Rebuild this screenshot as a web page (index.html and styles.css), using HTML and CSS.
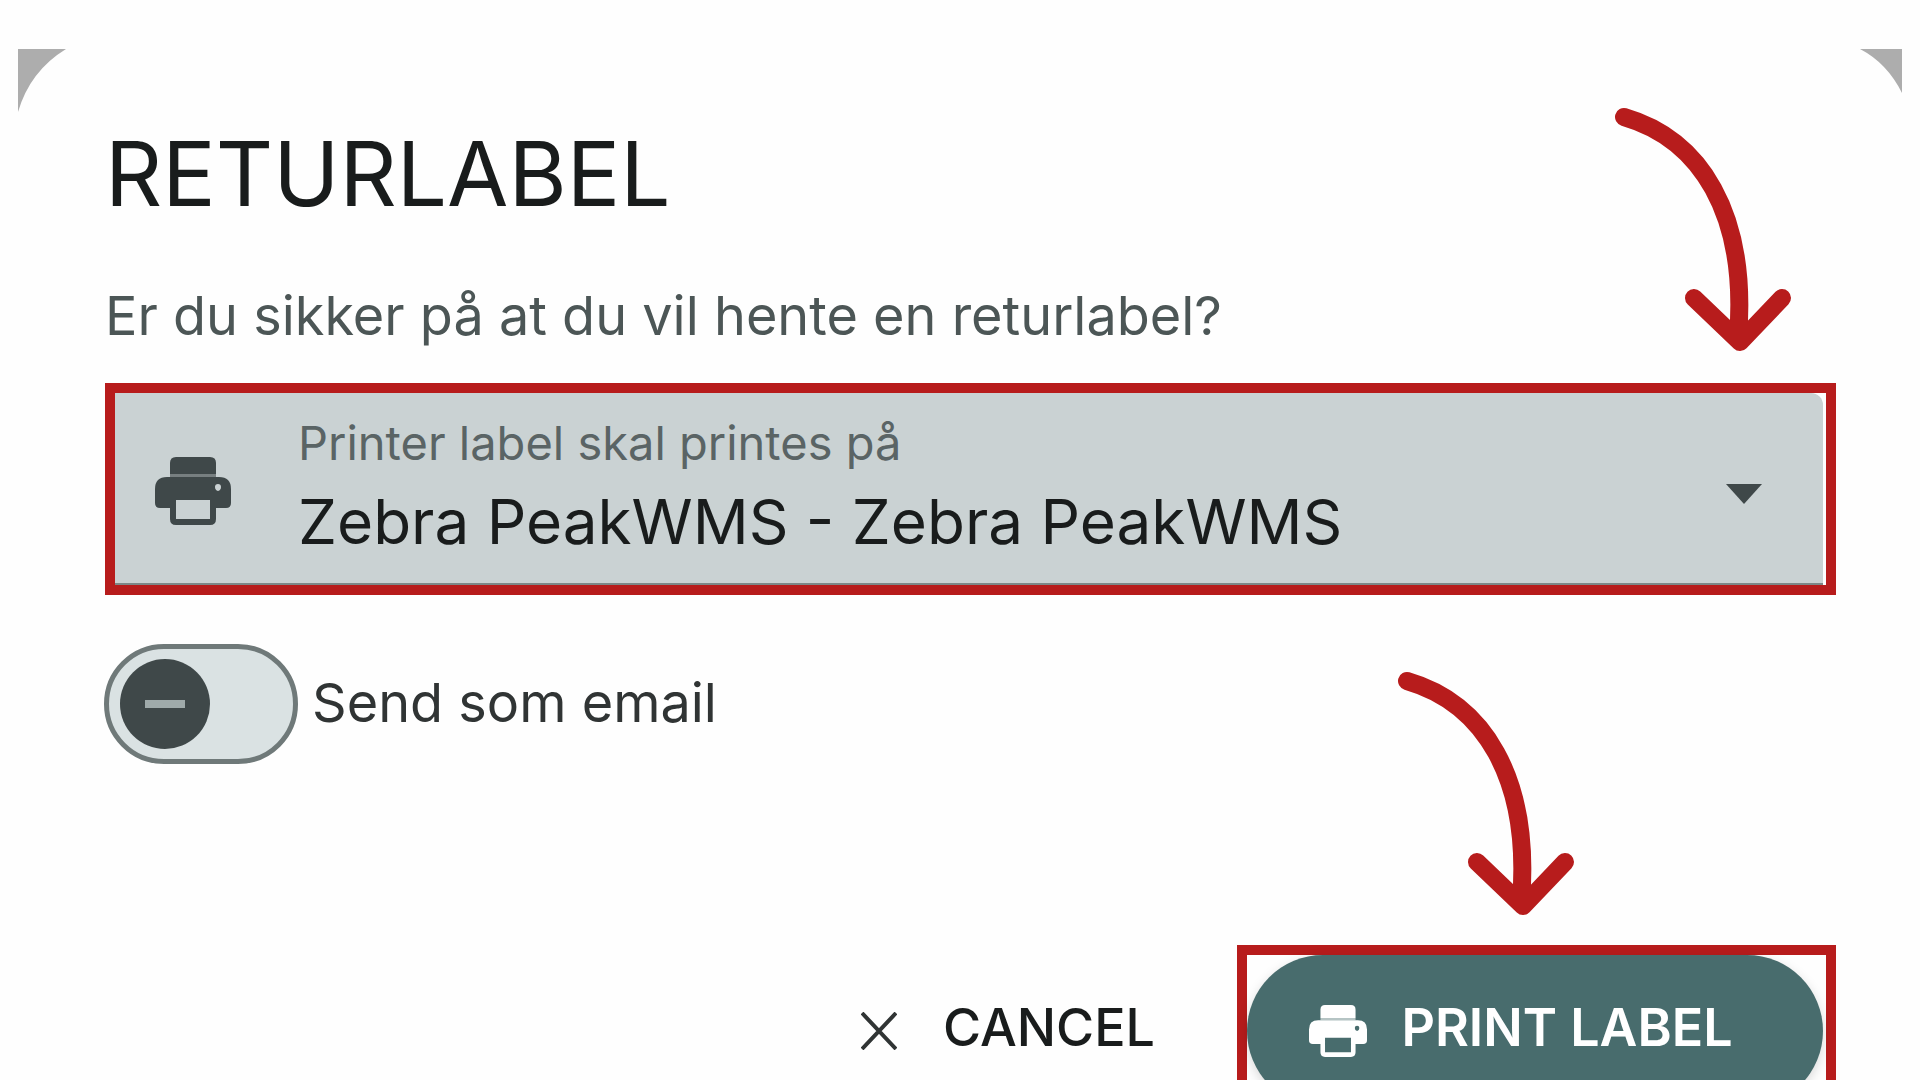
FILE: index.html
```html
<!DOCTYPE html>
<html lang="da">
<head>
<meta charset="utf-8">
<title>Returlabel</title>
<link rel="stylesheet" href="styles.css">
</head>
<body>
<svg class="defs" aria-hidden="true">
  <symbol id="printer" viewBox="0 0 76 68">
    <path d="M15 17V6q0-6 6-6h34q6 0 6 6v11z"/>
    <path opacity=".6" d="M15 17h46v3H15z"/>
    <path fill-rule="evenodd" d="M12 20h52q12 0 12 12v14q0 5-5 5H61v11q0 6-6 6H21q-6 0-6-6V51H5q-5 0-5-5V32q0-12 12-12zM21 43v19h34V43zM63 27q-3 0-3 3t3 4q3-1 3-4t-3-3z"/>
  </symbol>
  <symbol id="arrow" viewBox="0 0 200 260">
    <path d="M20 20C96 42 144 116 134 240M90 201l46 44 42-44"/>
  </symbol>
</svg>
<main class="dialog">
  <svg class="corner corner-left" viewBox="0 0 48 63" aria-hidden="true"><path d="M0 0H48Q12 22 0 63z"/></svg>
  <svg class="corner corner-right" viewBox="0 0 42 44" aria-hidden="true"><path d="M42 0H0Q27 14 42 44z"/></svg>
  <h1 class="title">RETURLABEL</h1>
  <p class="message">Er du sikker på at du vil hente en returlabel?</p>

  <div class="highlight">
    <div class="field">
      <svg class="field-icon" aria-hidden="true"><use href="#printer"/></svg>
      <div class="field-text">
        <label class="field-label" for="printer-select">Printer label skal printes på</label>
        <select class="field-select" id="printer-select">
          <option>Zebra PeakWMS - Zebra PeakWMS</option>
        </select>
      </div>
      <svg class="caret" viewBox="0 0 36 20" aria-hidden="true"><path d="M0 0h36L18 20z"/></svg>
    </div>
    <svg class="arrow arrow-field" aria-hidden="true"><use href="#arrow"/></svg>
  </div>

  <div class="switch-row">
    <input class="switch" type="checkbox" role="switch" id="send-email">
    <label class="switch-label" for="send-email">Send som email</label>
  </div>

  <div class="actions">
    <button class="button button-text" type="button">
      <svg class="close-icon" viewBox="0 0 36 38" aria-hidden="true"><path d="M1 1l34 36M35 1L1 37"/></svg>
      <span class="button-label">CANCEL</span>
    </button>
    <div class="highlight">
      <button class="button button-filled" type="button">
        <svg class="button-icon" aria-hidden="true"><use href="#printer"/></svg>
        <span class="button-label">PRINT LABEL</span>
      </button>
      <svg class="arrow arrow-print" aria-hidden="true"><use href="#arrow"/></svg>
    </div>
  </div>
</main>
</body>
</html>
```
FILE: styles.css
```css
* {
  box-sizing: border-box;
}

body {
  margin: 0;
  height: 100vh;
  overflow: hidden;
  background: #fefefe;
  color: #191c1c;
  font-family: Inter, "Liberation Sans", sans-serif;
}

.defs {
  position: absolute;
  width: 0;
  height: 0;
}

.dialog {
  position: relative;
  margin: 49px 18px 0;
  padding: 70px 66px 0 87px;
}

.corner {
  position: absolute;
  top: 0;
  fill: #adadad;
}

.corner-left {
  left: 0;
  width: 48px;
  height: 63px;
}

.corner-right {
  right: 0;
  width: 42px;
  height: 44px;
}

.title {
  margin: 0;
  font-size: 89px;
  font-weight: 400;
  line-height: 110px;
}

.message {
  margin: 55px 0 35px;
  color: #4c5656;
  font-size: 54px;
  line-height: 64px;
}

.highlight {
  position: relative;
  border: 10px solid #b71c1c;
}

.field {
  display: flex;
  align-items: center;
  height: 192px;
  margin-right: 3px;
  padding: 6px 61px 0 40px;
  border-bottom: 2px solid #7d8787;
  border-radius: 0 12px 0 0;
  background: #cad2d3;
}

.field-icon {
  width: 76px;
  height: 68px;
  fill: #3f4849;
}

.field-text {
  display: flex;
  flex: 1;
  flex-direction: column;
  margin-left: 67px;
  padding-top: 4px;
}

.field-label {
  color: #5a6465;
  font-size: 47px;
  line-height: 56px;
}

.field-select {
  width: 100%;
  height: 100px;
  padding: 0;
  border: 0;
  appearance: none;
  background: transparent;
  color: #191c1c;
  font-family: inherit;
  font-size: 62px;
}

.caret {
  width: 36px;
  height: 20px;
  margin-top: 6px;
  fill: #3f4849;
}

.arrow {
  position: absolute;
  width: 200px;
  height: 260px;
  fill: none;
  stroke: #b71c1c;
  stroke-width: 18px;
  stroke-linecap: round;
  stroke-linejoin: round;
}

.arrow-field {
  top: -296px;
  right: 22px;
}

.arrow-print {
  top: -294px;
  right: 239px;
}

.switch-row {
  display: flex;
  align-items: center;
  gap: 14px;
  margin-top: 49px;
}

.switch {
  display: flex;
  align-items: center;
  width: 194px;
  height: 120px;
  margin: 0 0 0 -1px;
  padding: 0 11px;
  border: 5px solid #6f7979;
  border-radius: 60px;
  appearance: none;
  background: #dae2e3;
}

.switch::before {
  width: 90px;
  height: 90px;
  border-radius: 50%;
  background: linear-gradient(#9faaaa, #9faaaa) center / 40px 8px no-repeat #3f4849;
  content: "";
}

.switch-label {
  padding-bottom: 2px;
  color: #303434;
  font-size: 54px;
  line-height: 64px;
}

.actions {
  display: flex;
  align-items: center;
  justify-content: flex-end;
  gap: 82px;
  margin-top: 181px;
}

.button {
  display: flex;
  align-items: center;
  height: 152px;
  padding: 0;
  border: 0;
  background: transparent;
  font-family: inherit;
  font-size: 52px;
  font-weight: 500;
}

.button-label {
  padding-bottom: 8px;
}

.button-text {
  gap: 46px;
  color: #191c1c;
}

.button-filled {
  justify-content: center;
  gap: 34px;
  width: 576px;
  margin-right: 3px;
  padding-right: 28px;
  border-radius: 76px;
  background: #486c6d;
  box-shadow: 0 4px 12px rgba(0, 0, 0, 0.15);
  color: #ffffff;
  font-weight: 600;
}

.close-icon {
  width: 36px;
  height: 38px;
  fill: none;
  stroke: #303434;
  stroke-width: 4px;
}

.button-icon {
  width: 58px;
  height: 54px;
  fill: #ffffff;
}
```
